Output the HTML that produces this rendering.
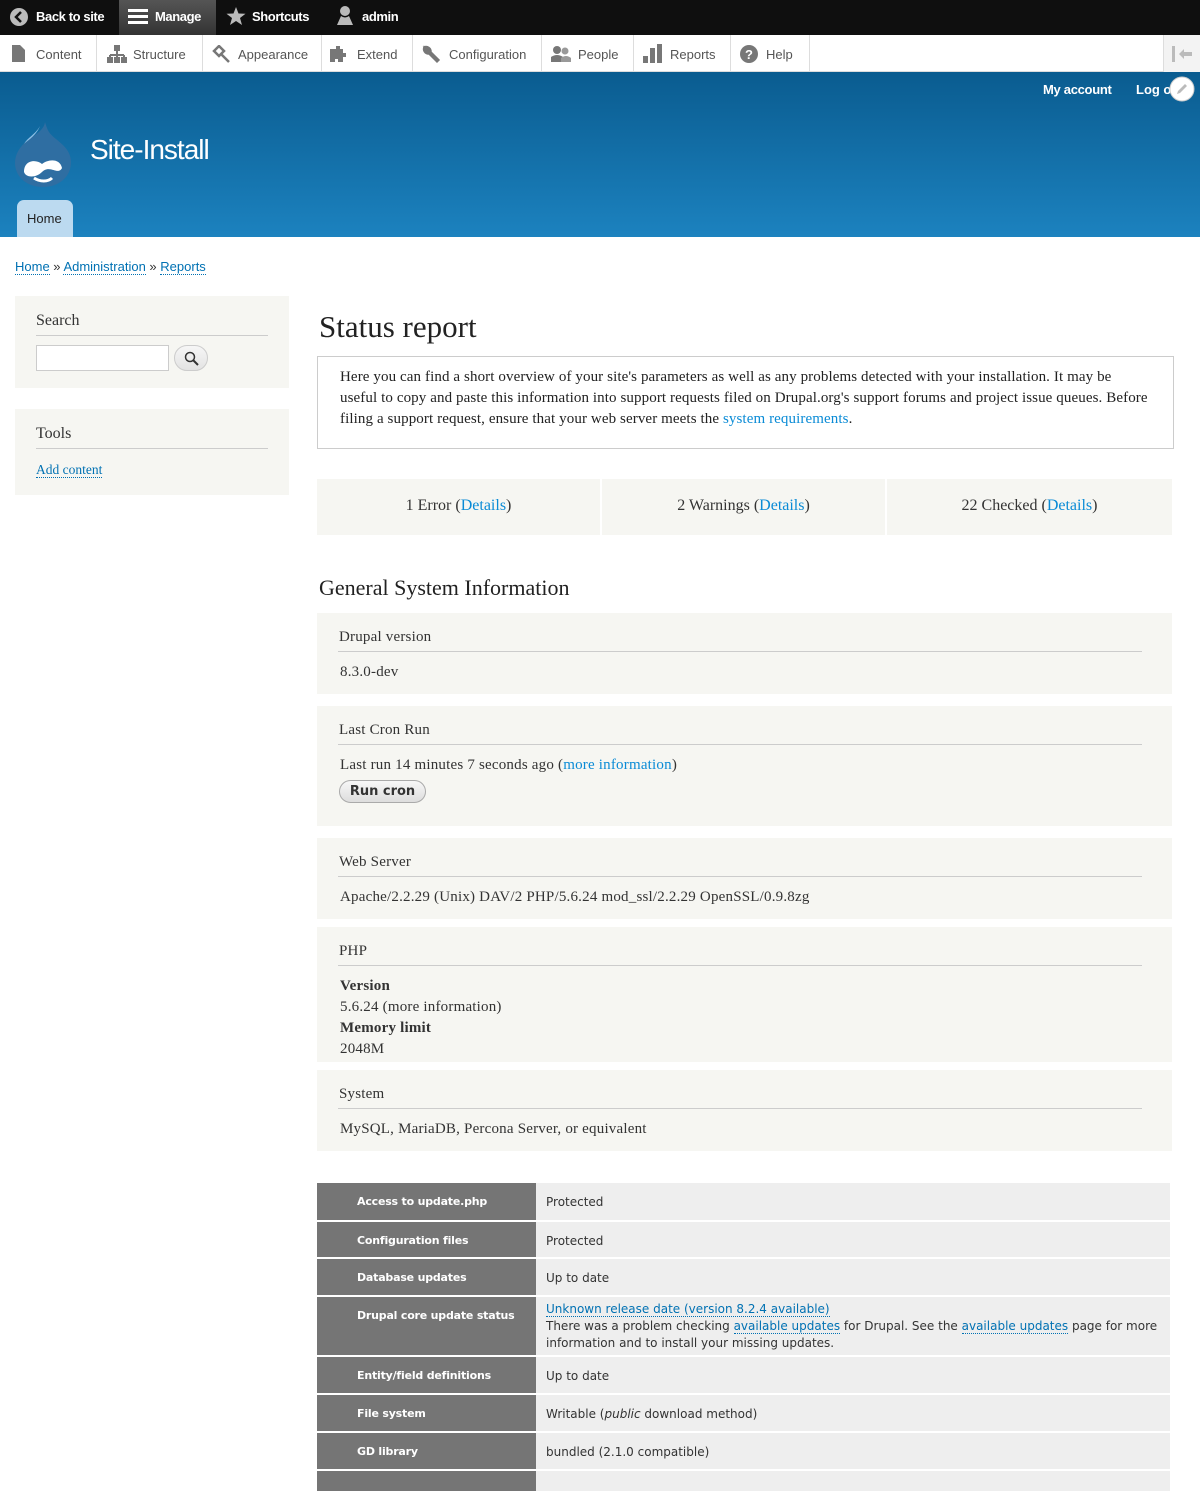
<!DOCTYPE html>
<html><head><meta charset="utf-8"><style>
*{box-sizing:border-box;margin:0;padding:0}
body{width:1200px;height:1484px;overflow:hidden;background:#fff;font-family:"Liberation Serif",serif;color:#333;position:relative}
.a{position:absolute}
.top{left:0;top:0;width:1200px;height:35px;background:#0f0f0f;font:bold 13px "Liberation Sans",sans-serif;color:#fff;letter-spacing:-0.4px}
.top span{position:absolute;top:9px}
.tray{left:0;top:35px;width:1200px;height:37px;background:#fff;font:13px "Liberation Sans",sans-serif;color:#555;border-bottom:1px solid #ddd}
.tray div{position:absolute;top:0;height:37px;border-right:1px solid #ddd;padding-top:12px}
.hdr{left:0;top:72px;width:1200px;height:165px;background:linear-gradient(#0a5c90,#1c82bf)}
a,.lk{color:#0071b3;text-decoration:none}
.blk{background:#f6f6f2}
.sb h2{font-weight:normal;font-size:16px;color:#333;border-bottom:1px solid #ccc;padding-bottom:5px;margin:0 21px}
.sec{position:absolute;left:317px;width:855px;background:#f6f6f2;font-size:15px;letter-spacing:0.2px}
.sec h3{font-weight:normal;font-size:15px;margin:0 30px 0 21px;padding:0 0 5px 1px;border-bottom:1px solid #ccc}
.sec p{margin:12px 0 0 23px}
.lk2{color:#0a8bd6}
.row{position:absolute;left:317px;width:853px;font:12px "DejaVu Sans",sans-serif}
.row .h{position:absolute;left:0;top:0;bottom:0;width:219px;background:#757575;color:#fff;font-weight:bold;font-size:11px;letter-spacing:-0.2px;padding:12px 0 0 40px}
.row .c{position:absolute;left:219px;right:0;top:0;bottom:0;background:#eee;padding:11px 0 0 10px;color:#333;line-height:17px}
.row .c a{border-bottom:1px dotted #0071b3}
</style></head><body>
<div class="a top">
<svg class="a" style="left:10px;top:8px" width="18" height="18"><circle cx="9" cy="9" r="9" fill="#bbb"/><path d="M11 4 L6 9 L11 14" stroke="#111" stroke-width="2.5" fill="none"/></svg>
<span style="left:36px">Back to site</span>
<div class="a" style="left:119px;top:0;width:97px;height:35px;background:linear-gradient(#555,#333)"></div>
<svg class="a" style="left:128px;top:8px" width="20" height="18"><rect y="1" width="20" height="3" fill="#fff"/><rect y="7" width="20" height="3" fill="#fff"/><rect y="13" width="20" height="3" fill="#fff"/></svg>
<span style="left:155px">Manage</span>
<svg class="a" style="left:226px;top:6px" width="20" height="20"><path d="M10 1 L12.5 7.5 L19.5 7.8 L14 12 L16 19 L10 15 L4 19 L6 12 L0.5 7.8 L7.5 7.5Z" fill="#bbb"/></svg>
<span style="left:252px">Shortcuts</span>
<svg class="a" style="left:336px;top:5px" width="18" height="22"><circle cx="9" cy="6" r="5" fill="#bbb"/><path d="M5 11 Q9 14 13 11 L17 20 L1 20Z" fill="#bbb"/></svg>
<span style="left:362px">admin</span>
</div>
<div class="a tray">
<div style="left:0;width:97px;padding-left:36px">Content</div>
<div style="left:97px;width:106px;padding-left:36px">Structure</div>
<div style="left:203px;width:119px;padding-left:35px">Appearance</div>
<div style="left:322px;width:91px;padding-left:35px">Extend</div>
<div style="left:413px;width:129px;padding-left:36px">Configuration</div>
<div style="left:542px;width:92px;padding-left:36px">People</div>
<div style="left:634px;width:97px;padding-left:36px">Reports</div>
<div style="left:731px;width:79px;padding-left:35px">Help</div>
<div style="left:1163px;width:37px;background:#f3f3f3;border-left:1px solid #ddd;border-right:0"></div>
<svg class="a" style="left:12px;top:10px" width="14" height="17"><path d="M0 0 H8 L13 5 V17 H0Z" fill="#777"/></svg>
<svg class="a" style="left:107px;top:10px" width="20" height="18"><rect x="7" y="0" width="6" height="6" fill="#777"/><path d="M10 6 V10 M3 10 H17 M3 10 V13 M10 10 V13 M17 10 V13" stroke="#777" stroke-width="2"/><rect x="0" y="12" width="6" height="6" fill="#777"/><rect x="7" y="12" width="6" height="6" fill="#777"/><rect x="14" y="12" width="6" height="6" fill="#777"/></svg>
<svg class="a" style="left:212px;top:10px" width="19" height="18"><path d="M2 6 L7 1 L12 6 L7 11Z M9 9 L17 17" stroke="#777" stroke-width="2.5" fill="none"/></svg>
<svg class="a" style="left:330px;top:10px" width="20" height="18"><path d="M0 4 H6 V1 H10 V4 H13 V8 H16 V12 H13 V17 H8 V14 H5 V17 H0Z" fill="#777"/></svg>
<svg class="a" style="left:421px;top:9px" width="20" height="20"><path d="M3 3 A5 5 0 0 0 8 10 L16 18 L18 16 L10 8 A5 5 0 0 0 3 3 L6 6 L5 7Z" fill="#777" stroke="#777" stroke-width="1.5"/></svg>
<svg class="a" style="left:551px;top:10px" width="20" height="18"><circle cx="6" cy="5" r="4" fill="#777"/><path d="M0 17 V12 Q6 8 12 12 V17Z" fill="#777"/><circle cx="14" cy="6" r="3.5" fill="#999"/><path d="M10 17 V13 Q15 9 20 13 V17Z" fill="#999"/></svg>
<svg class="a" style="left:643px;top:9px" width="20" height="19"><rect x="0" y="12" width="5" height="7" fill="#777"/><rect x="7" y="4" width="5" height="15" fill="#777"/><rect x="14" y="0" width="5" height="19" fill="#777"/></svg>
<svg class="a" style="left:740px;top:10px" width="18" height="18"><circle cx="9" cy="9" r="9" fill="#777"/><text x="9" y="14" text-anchor="middle" font-family="Liberation Sans" font-weight="bold" font-size="13" fill="#fff">?</text></svg>
<svg class="a" style="left:1172px;top:11px" width="22" height="16"><rect x="0" y="0" width="3" height="16" fill="#bbb"/><path d="M7 8 L12 3 V6 H20 V10 H12 V13Z" fill="#bbb"/></svg>
</div>
<div class="a hdr">
<div class="a" style="left:1043px;top:10px;font:bold 13px 'Liberation Sans',sans-serif;color:#fff;letter-spacing:-0.3px">My account</div>
<div class="a" style="left:1136px;top:10px;font:bold 13px 'Liberation Sans',sans-serif;color:#fff">Log o</div>
<svg class="a" style="left:1169px;top:4px" width="26" height="26"><circle cx="13" cy="13" r="12" fill="#fff" stroke="#ccc"/><path d="M8 18 L9 15 L16 8 L18 10 L11 17Z" fill="#bbb"/></svg>
<svg class="a" style="left:14px;top:48px" width="58" height="68" viewBox="0 0 58 68"><path d="M31 2 C30 10 22 14 14 20 C5 27 1 35 1 43 C1 57 13 67 29 67 C45 67 57 57 57 42 C57 26 40 20 35 12 C33 9 32 5 31 2Z" fill="#2f6ea2"/><path d="M26 6 C22 14 14 17 10 24 C14 20 22 16 26 6Z" fill="#8fc0e6"/><path d="M10 52 C10 40 22 39 28 44 C34 39 46 38 48 48 C44 56 36 44 28 52 C22 58 12 58 10 52Z" fill="#fff"/><path d="M20 58 C26 62 34 62 38 58" stroke="#fff" stroke-width="3" fill="none"/></svg>
<div class="a" style="left:90px;top:62px;font:28px 'Liberation Sans',sans-serif;color:#fff;letter-spacing:-1px">Site-Install</div>
<div class="a" style="left:17px;top:128px;width:56px;height:37px;background:#bcdaf0;border-radius:7px 7px 0 0;font:13px 'Liberation Sans',sans-serif;color:#222;padding:11px 0 0 10px">Home</div>
</div>
<div class="a" style="left:15px;top:259px;font:13px 'Liberation Sans',sans-serif;color:#333"><a style="border-bottom:1px dotted #0071b3">Home</a> » <a style="border-bottom:1px dotted #0071b3">Administration</a> » <a style="border-bottom:1px dotted #0071b3">Reports</a></div>
<div class="a blk sb" style="left:15px;top:296px;width:274px;height:92px;padding-top:16px">
<h2>Search</h2>
<div class="a" style="left:21px;top:49px;width:133px;height:26px;border:1px solid #ccc;background:#fff"></div>
<div class="a" style="left:159px;top:49px;width:34px;height:26px;border:1px solid #ccc;border-radius:13px;background:linear-gradient(#f6f6f6,#e3e3e3)"><svg style="position:absolute;left:9px;top:5px" width="15" height="15"><circle cx="6" cy="6" r="4.5" stroke="#333" stroke-width="1.5" fill="none"/><path d="M9 9 L14 14" stroke="#333" stroke-width="2"/></svg></div>
</div>
<div class="a blk sb" style="left:15px;top:409px;width:274px;height:86px;padding-top:16px">
<h2>Tools</h2>
<div style="margin:13px 21px;font-size:13.5px"><a style="border-bottom:1px dotted #0071b3">Add content</a></div>
</div>
<div class="a" style="left:319px;top:309px;font-size:31px;color:#222">Status report</div>
<div class="a" style="left:317px;top:356px;width:857px;height:93px;border:1px solid #ccc;padding:10px 22px;font-size:15px;letter-spacing:0.1px;line-height:21px;color:#222">Here you can find a short overview of your site's parameters as well as any problems detected with your installation. It may be useful to copy and paste this information into support requests filed on Drupal.org's support forums and project issue queues. Before filing a support request, ensure that your web server meets the <span class="lk2">system requirements</span>.</div>
<div class="a blk" style="left:317px;top:479px;width:283px;height:56px;text-align:center;padding-top:18px;font-size:16px">1 Error (<span class="lk2">Details</span>)</div>
<div class="a blk" style="left:602px;top:479px;width:283px;height:56px;text-align:center;padding-top:18px;font-size:16px">2 Warnings (<span class="lk2">Details</span>)</div>
<div class="a blk" style="left:887px;top:479px;width:285px;height:56px;text-align:center;padding-top:18px;font-size:16px">22 Checked (<span class="lk2">Details</span>)</div>
<div class="a" style="left:319px;top:575px;font-size:22px;color:#222">General System Information</div>
<div class="sec" style="top:613px;height:81px;padding-top:16px"><h3>Drupal version</h3><p>8.3.0-dev</p></div>
<div class="sec" style="top:706px;height:120px;padding-top:16px"><h3>Last Cron Run</h3><p>Last run 14 minutes 7 seconds ago (<span class="lk2">more information</span>)</p>
<div style="margin:6px 0 0 22px;width:87px;height:23px;border:1px solid #aaa;border-radius:12px;background:linear-gradient(#f7f7f7,#ddd);font:bold 13px 'DejaVu Sans',sans-serif;letter-spacing:0;color:#333;text-align:center;padding-top:3px">Run cron</div></div>
<div class="sec" style="top:838px;height:81px;padding-top:16px"><h3>Web Server</h3><p>Apache/2.2.29 (Unix) DAV/2 PHP/5.6.24 mod_ssl/2.2.29 OpenSSL/0.9.8zg</p></div>
<div class="sec" style="top:927px;height:135px;padding-top:16px"><h3>PHP</h3><p style="line-height:21px;margin-top:10px"><b>Version</b><br>5.6.24 (more information)<br><b>Memory limit</b><br>2048M</p></div>
<div class="sec" style="top:1070px;height:81px;padding-top:16px"><h3>System</h3><p>MySQL, MariaDB, Percona Server, or equivalent</p></div>
<div class="row" style="top:1183px;height:37px"><div class="h">Access to update.php</div><div class="c">Protected</div></div>
<div class="row" style="top:1222px;height:35px"><div class="h">Configuration files</div><div class="c">Protected</div></div>
<div class="row" style="top:1259px;height:36px"><div class="h">Database updates</div><div class="c">Up to date</div></div>
<div class="row" style="top:1297px;height:58px"><div class="h" style="padding-top:12px">Drupal core update status</div><div class="c" style="padding-top:4px"><a>Unknown release date (version 8.2.4 available)</a><br>There was a problem checking <a>available updates</a> for Drupal. See the <a>available updates</a> page for more information and to install your missing updates.</div></div>
<div class="row" style="top:1357px;height:36px"><div class="h">Entity/field definitions</div><div class="c">Up to date</div></div>
<div class="row" style="top:1395px;height:36px"><div class="h">File system</div><div class="c">Writable (<i>public</i> download method)</div></div>
<div class="row" style="top:1433px;height:36px"><div class="h">GD library</div><div class="c">bundled (2.1.0 compatible)</div></div>
<div class="row" style="top:1471px;height:20px"><div class="h"></div><div class="c"></div></div>
</body></html>
